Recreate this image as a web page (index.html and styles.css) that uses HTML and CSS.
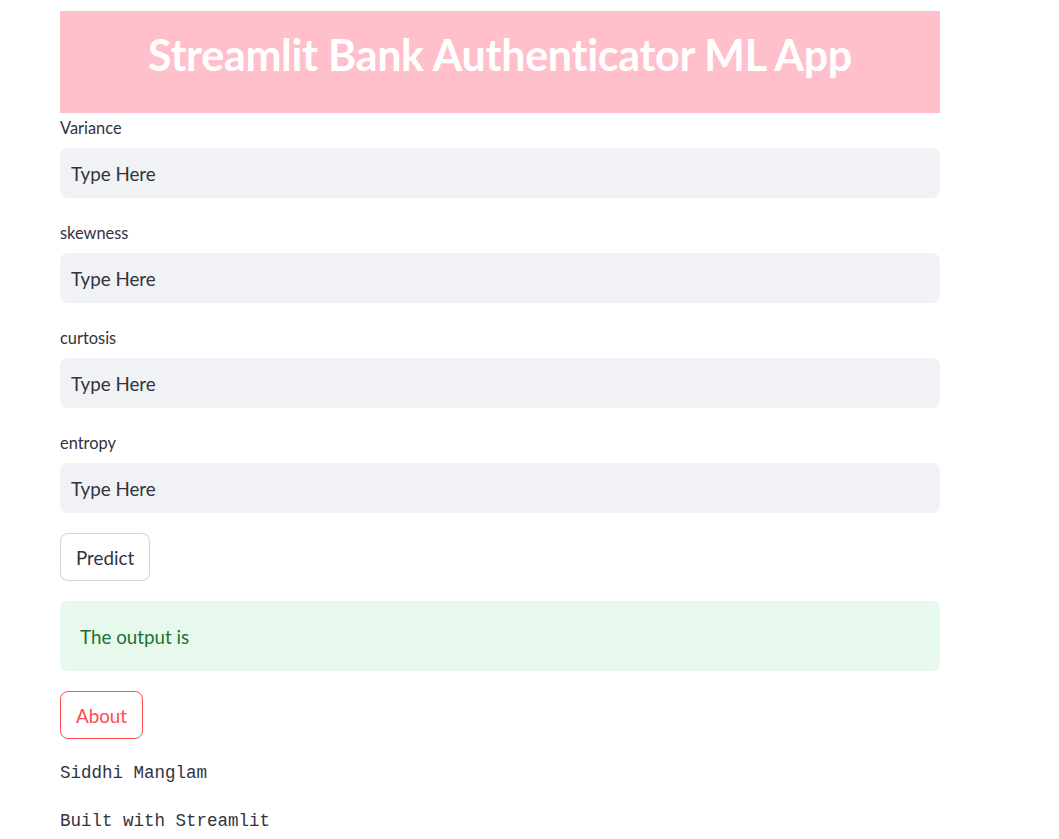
FILE: index.html
```html
<!DOCTYPE html>
<html>
<head>
<meta charset="utf-8">
<link rel="stylesheet" href="styles.css">
</head>
<body>
<main class="page">
  <div class="banner"><h2 class="banner-title">Streamlit Bank Authenticator ML App</h2></div>
  <div class="stack">
    <div class="field">
      <label class="field-label">Variance</label>
      <div class="field-input">Type Here</div>
    </div>
    <div class="field">
      <label class="field-label">skewness</label>
      <div class="field-input">Type Here</div>
    </div>
    <div class="field">
      <label class="field-label">curtosis</label>
      <div class="field-input">Type Here</div>
    </div>
    <div class="field">
      <label class="field-label">entropy</label>
      <div class="field-input">Type Here</div>
    </div>
    <div><button class="btn btn-predict">Predict</button></div>
    <div class="success">The output is</div>
    <div><button class="btn btn-about">About</button></div>
    <div class="mono">Siddhi Manglam</div>
    <div class="mono">Built with Streamlit</div>
  </div>
</main>
</body>
</html>
```
FILE: styles.css
```css
html, body {
  margin: 0;
  padding: 0;
  background: #ffffff;
}
body {
  font-family: Lato, "Noto Sans", sans-serif;
  color: #31333f;
}
.page {
  width: 880px;
  margin-left: 60px;
  padding-top: 11px;
}
.banner {
  background: #ffc0cb;
  height: 102px;
  box-sizing: border-box;
  padding-bottom: 16px;
  display: flex;
  align-items: center;
  justify-content: center;
}
.banner-title {
  margin: 0;
  color: #ffffff;
  font-size: 43px;
  font-weight: 700;
  letter-spacing: -0.3px;
}
.stack {
  display: flex;
  flex-direction: column;
  gap: 20px;
}
.field {
  display: flex;
  flex-direction: column;
}
.field-label {
  font-size: 16.4px;
  line-height: 30px;
  height: 30px;
}
.field-input {
  margin-top: 5px;
  height: 50px;
  border-radius: 8px;
  background: #f0f2f6;
  padding-left: 11px;
  display: flex;
  align-items: center;
  font-size: 18.8px;
  color: #31333f;
}
.btn {
  font-family: inherit;
  font-size: 18.8px;
  height: 48px;
  padding: 0 15px;
  border-radius: 8px;
  background: #ffffff;
  cursor: pointer;
}
.btn-predict {
  border: 1px solid rgba(49, 51, 63, 0.2);
  color: #31333f;
}
.btn-about {
  border: 1px solid #ff4b4b;
  color: #ff4b4b;
}
.success {
  height: 70px;
  border-radius: 6px;
  background: #e7f8ed;
  color: #177233;
  padding-left: 20px;
  display: flex;
  align-items: center;
  font-size: 18.8px;
}
.mono {
  font-family: "Liberation Mono", "DejaVu Sans Mono", monospace;
  font-size: 17.5px;
  line-height: 28px;
  color: #31333f;
}
```
